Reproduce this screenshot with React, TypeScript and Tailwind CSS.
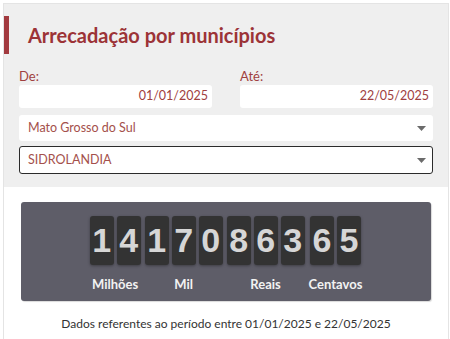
const groups = [
  { label: "Milhões", digits: ["1", "4"] },
  { label: "Mil", digits: ["1", "7", "0"] },
  { label: "Reais", digits: ["8", "6", "3"] },
  { label: "Centavos", digits: ["6", "5"] },
];

function Caret() {
  return (
    <svg width="9" height="5" viewBox="0 0 9 5" className="shrink-0">
      <path d="M0 0h9L4.5 5z" fill="#6b6b6b" />
    </svg>
  );
}

export default function App() {
  return (
    <div className="w-[450px] h-[339px] bg-white pl-[3px] pr-[1px] pt-[3px] overflow-hidden font-['Lato','Noto_Sans',sans-serif]">
      <div className="border border-[#e4e4e4] h-[400px]">
        {/* filtros */}
        <div className="bg-[#efefef] pb-[13px]">
          <div className="flex items-center pt-[12px]">
            <div className="w-[5px] h-[38px] bg-[#a23a3f]" />
            <h1 className="ml-[19px] text-[20px] font-bold text-[#9c3337] leading-none pb-[1px]">
              Arrecadação por municípios
            </h1>
          </div>

          <div className="px-[15px] mt-[14px]">
            <div className="grid grid-cols-2 gap-x-[28px]">
              <div className="flex flex-col">
                <label className="text-[13px] leading-[16px] text-[#a03f40]">De:</label>
                <div className="mt-[1px] h-[23px] rounded-[3px] bg-white flex items-center justify-end px-[4px] text-[12.5px] text-[#a0403f]">
                  01/01/2025
                </div>
              </div>
              <div className="flex flex-col">
                <label className="text-[13px] leading-[16px] text-[#a03f40]">Até:</label>
                <div className="mt-[1px] h-[23px] rounded-[3px] bg-white flex items-center justify-end px-[4px] text-[12.5px] text-[#a0403f]">
                  22/05/2025
                </div>
              </div>
            </div>

            <div className="mt-[7px] h-[26px] rounded-[3px] bg-white flex items-center justify-between pl-[9px] pr-[7px] text-[12.5px] text-[#a4504b]">
              <span>Mato Grosso do Sul</span>
              <Caret />
            </div>
            <div className="mt-[5px] h-[28px] rounded-[3px] bg-white border-[1.5px] border-[#2b2b2b] flex items-center justify-between pl-[8px] pr-[6px] text-[12.5px] text-[#a4504b]">
              <span>SIDROLANDIA</span>
              <Caret />
            </div>
          </div>
        </div>

        {/* contador */}
        <div className="px-[17px] pt-[15px]">
          <div className="h-[99px] rounded-[3px] bg-[#5e5d68] shadow-[1px_1px_1px_rgba(0,0,0,0.15)] flex justify-center pt-[14px] gap-[4px]">
            {groups.map((g) => (
              <div key={g.label} className="flex flex-col items-center">
                <div className="flex gap-[3px]">
                  {g.digits.map((d, i) => (
                    <div
                      key={i}
                      className="w-[24px] h-[49px] rounded-[3px] bg-[#333333] shadow-[0_1px_3px_rgba(0,0,0,0.35)] flex items-center justify-center font-['Liberation_Sans',Arial,sans-serif] font-bold text-[34px] text-[#d6d6d6]"
                    >
                      {d}
                    </div>
                  ))}
                </div>
                <span className="mt-[11px] text-[13px] font-bold leading-[16px] text-[#f2f2f2]">
                  {g.label}
                </span>
              </div>
            ))}
          </div>
          <p className="mt-[14px] text-center text-[12px] text-[#333]">
            Dados referentes ao período entre 01/01/2025 e 22/05/2025
          </p>
        </div>
      </div>
    </div>
  );
}
